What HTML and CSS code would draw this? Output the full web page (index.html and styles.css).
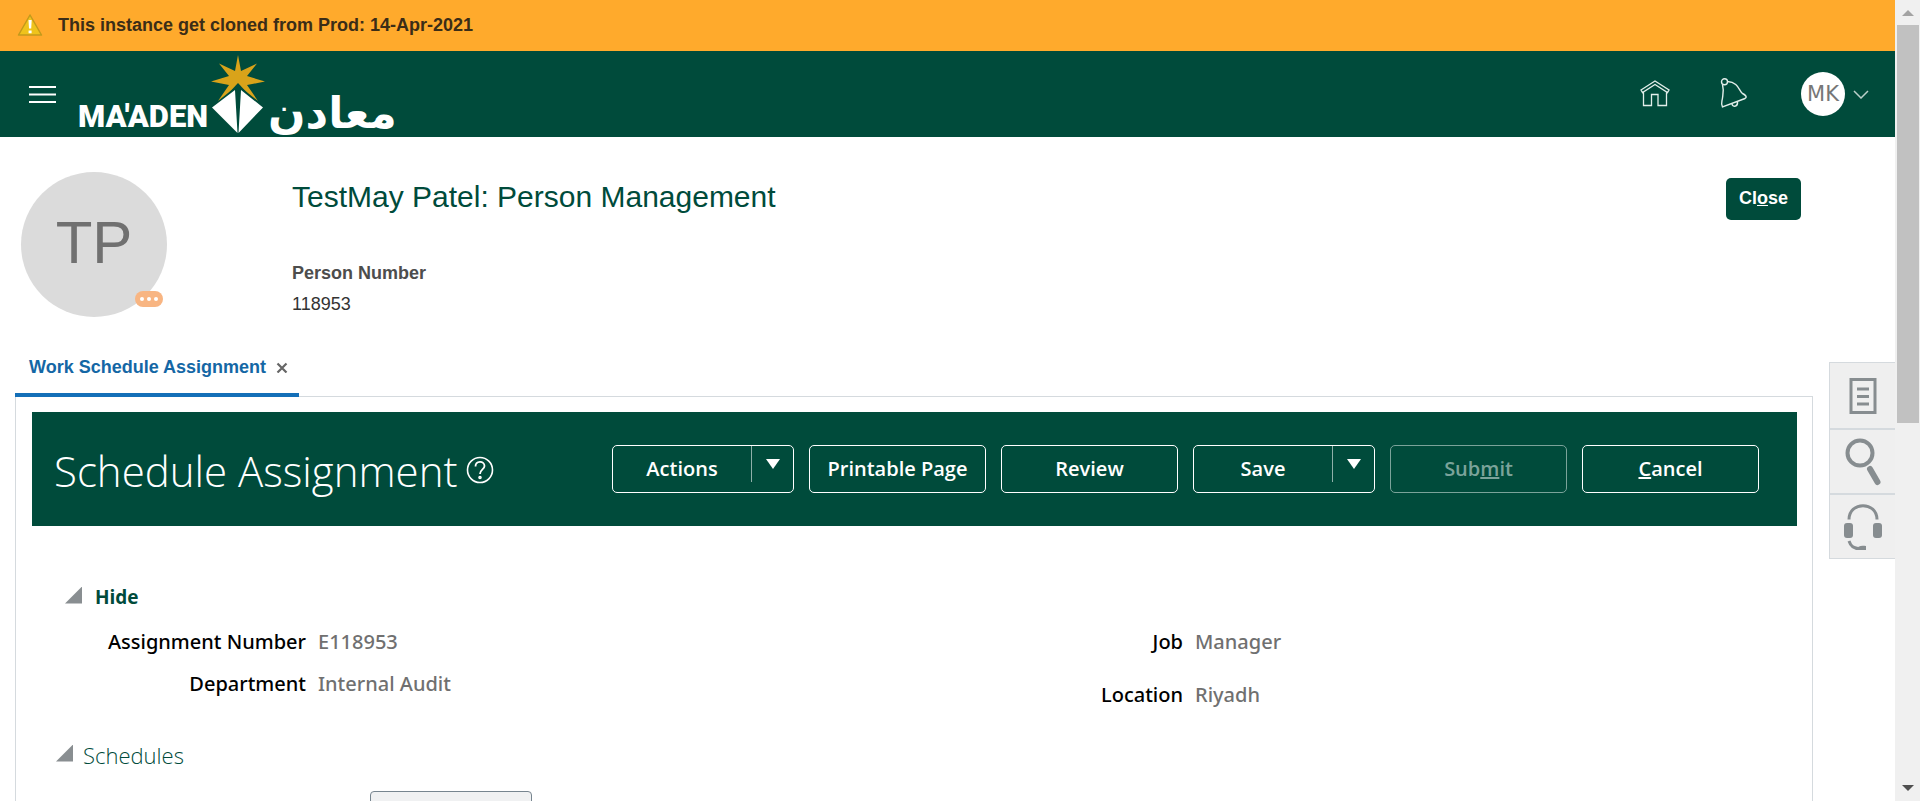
FILE: index.html
```html
<!DOCTYPE html>
<html lang="en">
<head>
<meta charset="utf-8">
<title>TestMay Patel: Person Management</title>
<link rel="stylesheet" href="styles.css">
</head>
<body>
<div class="window">
  <div class="page">
    <div class="banner" role="status">
      <svg class="banner-icon" width="26" height="24" viewBox="0 0 26 24" aria-hidden="true"><path d="M13 1 L24.500 21 H1.500 Z" fill="#efc31c" stroke="#c39a1c" stroke-width="1.500" stroke-linejoin="round"/><path d="M11.500 6 h3.200 l-.5 8.500 h-2.200z M11.600 16.400h3v2.800h-3z" fill="#fff"/></svg>
      <span>This instance get cloned from Prod: 14-Apr-2021</span>
    </div>
    <header class="header">
      <button class="icon-button" aria-label="Navigator"><svg width="28" height="20" viewBox="0 0 28 20"><path d="M0 3h27M0 10.500h27M0 18h27" stroke="#fff" stroke-width="2"/></svg></button>
      <a class="logo" href="#" aria-label="Ma'aden home">
        <span class="logo-latin">MA'ADEN</span>
        <svg width="54" height="80" viewBox="0 0 54 80" aria-hidden="true"><path d="M27 1 L30 17 L46 9.500 L36 22 L54 27.500 L36 31 L47 47 L27 31 L7 47 L18 31 L0 27.500 L18 22 L8 9.500 L24 17 Z" fill="#d9a31a"/><path d="M27 29 L40 43 H14 Z" fill="#004b3b"/><path d="M24 36 L26.500 79 L1 53.500 Z M30 36 L52 53.500 L27.500 79 Z" fill="#fff"/></svg>
        <span class="logo-arabic" lang="ar" dir="rtl">معادن</span>
      </a>
      <nav class="header-tools">
        <button class="icon-button" aria-label="Home"><svg width="30" height="28" viewBox="0 0 30 28" fill="none" stroke="#e2eeea" stroke-width="1.300"><path d="M1 10 L15 1 L29 10 L27.500 12.500 L15 4.500 L2.500 12.500 Z M3.500 12 V25.500 H11.500 V14.500 H18 V25.500 H26.500 V12"/></svg></button>
        <button class="icon-button" aria-label="Notifications"><svg width="28" height="32" viewBox="0 0 28 32" fill="none" stroke="#e2eeea" stroke-width="1.400"><circle cx="4.500" cy="3.800" r="3"/><path d="M2.500 6.500 C4 12 3 16 2.500 20 C2 24 .5 26 2.500 29 L25 20.500 C27.500 19 25.500 17 22.500 15.500 C19 13 18.500 4 7.500 3.500 M12 26 C13 30 18 28.500 17.500 24"/></svg></button>
        <button class="user-menu" aria-label="MK user menu"><span class="user-badge">MK</span><svg width="16" height="10" viewBox="0 0 16 10" fill="none" stroke="#b9cfc9" stroke-width="1.500"><path d="M1 2l7 7 7-7"/></svg></button>
      </nav>
    </header>
    <section class="person">
      <div class="avatar">TP<button class="avatar-more" aria-label="More"><i></i><i></i><i></i></button></div>
      <div class="person-info">
        <h1 class="person-title">TestMay Patel: Person Management</h1>
        <dl class="person-number"><dt>Person Number</dt><dd>118953</dd></dl>
      </div>
      <button class="close-button">Cl<u>o</u>se</button>
    </section>
    <div class="work-row">
      <main class="work">
        <div class="tabs">
          <div class="tab"><a href="#">Work Schedule Assignment</a><button class="icon-button" aria-label="Close tab"><svg width="12" height="12" viewBox="0 0 12 12"><path d="M1.500 2.500l9 9m0-9l-9 9" stroke="#666" stroke-width="2.200"/></svg></button></div>
        </div>
        <div class="panel">
          <div class="toolbar">
            <h2 class="toolbar-title">Schedule Assignment</h2>
            <button class="icon-button help" aria-label="Help"><svg width="28" height="28" viewBox="0 0 28 28" fill="none" stroke="#fff" stroke-width="1.600"><circle cx="14" cy="14" r="12.500"/><path d="M9.500 10.500 C9.500 4.500 18.500 4.500 18.500 10 C18.500 13.500 14 13.500 14 18" stroke-width="1.800"/><circle cx="14" cy="21.500" r="1"/></svg></button>
            <div class="actions">
              <div class="split"><button class="split-main">Actions</button><button class="split-arrow" aria-label="More actions"></button></div>
              <button class="action">Printable Page</button>
              <button class="action">Review</button>
              <div class="split"><button class="split-main">Save</button><button class="split-arrow" aria-label="More save options"></button></div>
              <button class="action" disabled>Sub<u>m</u>it</button>
              <button class="action"><u>C</u>ancel</button>
            </div>
          </div>
          <button class="disclosure hide-toggle" aria-expanded="true"><span class="triangle"></span>Hide</button>
          <div class="details">
            <dl class="detail-list"><dt>Assignment Number</dt><dd>E118953</dd><dt>Department</dt><dd>Internal Audit</dd></dl>
            <dl class="detail-list detail-list-right"><dt>Job</dt><dd>Manager</dd><dt>Location</dt><dd>Riyadh</dd></dl>
          </div>
          <h3 class="schedules"><button class="disclosure schedules-toggle" aria-expanded="true"><span class="triangle"></span>Schedules</button></h3>
          <button class="table-button" aria-label="Table actions"></button>
        </div>
      </main>
      <aside class="side-tools">
        <button aria-label="Worklist"><svg width="28" height="36" viewBox="0 0 28 36" fill="none" stroke="#878d90" stroke-width="3"><path d="M2 1.500h24v33H2zM8 11h12M8 18.500h12M8 26h12"/></svg></button>
        <button aria-label="Search"><svg width="36" height="48" viewBox="0 0 36 48" fill="none" stroke="#878d90"><circle cx="15" cy="15" r="12.500" stroke-width="4"/><path d="M25 31l7.500 13" stroke-width="6" stroke-linecap="round"/></svg></button>
        <button aria-label="Support"><svg width="40" height="48" viewBox="0 0 40 48" fill="none" stroke="#878d90" stroke-width="3"><path d="M6 16.500C6-2 34-2 34 16.500M6 38c2 6 5 7 9 7.500"/><rect x="1" y="20" width="9" height="15" rx="3" fill="#878d90" stroke="none"/><rect x="30" y="20" width="9" height="15" rx="3" fill="#878d90" stroke="none"/><path d="M12 47c3-4 6-5 11-4v4z" fill="#878d90" stroke="none"/></svg></button>
      </aside>
    </div>
  </div>
  <div class="scroll" aria-hidden="true"><span class="scroll-up"></span><span class="scroll-track"><span class="scroll-thumb"></span></span><span class="scroll-down"></span></div>
</div>
</body>
</html>
```

FILE: styles.css
```css
* { box-sizing: border-box; }
body { margin: 0; background: #fff; font-family: "Liberation Sans", Arial, sans-serif; font-size: 18px; color: #333; }
button { border: 0; padding: 0; margin: 0; background: none; font: inherit; color: inherit; }
a { text-decoration: none; }
svg { display: block; }
dl, dt, dd, h1, h2, h3 { margin: 0; }

.window { display: grid; grid-template-columns: minmax(0, 1fr) 25px; height: 100vh; overflow: hidden; }
.page { min-width: 0; overflow: hidden; }

.banner { display: flex; align-items: center; gap: 15px; height: 51px; padding: 0 17px; background: #ffaa2c; color: #3b2d17; font-weight: bold; }
.header { display: flex; align-items: center; height: 86px; padding: 0 26px 0 29px; background: #004b3b; }
.logo { display: flex; align-items: flex-end; gap: 3px; height: 80px; margin-left: 21px; color: #fff; }
.logo-latin { font: 900 31px/34px Roboto, sans-serif; }
.logo-arabic { font: bold 44px/42px "DejaVu Sans", sans-serif; }
.header-tools { display: flex; align-items: center; gap: 50px; margin-left: auto; }
.user-menu { display: flex; align-items: center; gap: 8px; margin-left: 3px; }
.user-badge { display: grid; place-items: center; width: 44px; height: 44px; border-radius: 50%; background: #fff; color: #777; font: 21px/24px "DejaVu Sans", sans-serif; }

.person { display: flex; align-items: flex-start; height: 210px; padding: 35px 94px 0 21px; }
.avatar { position: relative; display: grid; place-items: center; width: 146px; height: 145px; padding-bottom: 4px; border-radius: 50%; background: #dbdbdb; color: #707070; font-size: 60px; }
.avatar-more { position: absolute; right: 4px; bottom: 10px; display: flex; align-items: center; justify-content: center; gap: 3px; width: 28px; height: 16px; border-radius: 8px; background: #f8b582; }
.avatar-more i { width: 4px; height: 4px; border-radius: 50%; background: #fff; }
.person-info { flex: 1; margin-left: 125px; padding-top: 7px; }
.person-title { color: #004b3b; font-size: 30px; line-height: 36px; font-weight: normal; }
.person-number { margin-top: 43px; line-height: 31px; }
.person-number dt { color: #4d4d4d; font-weight: bold; }
.close-button { margin-top: 6px; width: 75px; height: 42px; padding-bottom: 2px; border-radius: 5px; background: #004b3b; color: #fff; font-weight: bold; }

.work-row { display: flex; align-items: flex-start; }
.work { flex: 1; min-width: 0; margin: 0 16px 0 15px; }
.tabs { display: flex; height: 50px; border-bottom: 1px solid #d5dade; }
.tab { display: flex; align-items: center; gap: 10px; height: 50px; padding: 0 11px 6px 14px; border-bottom: 4px solid #146fb8; }
.tab a { color: #1467a5; font-weight: bold; }
.panel { border: 1px solid #d5dade; border-top: 0; height: 460px; padding: 15px 15px 0 16px; }
.toolbar { display: flex; align-items: center; height: 114px; padding: 0 38px 0 22px; background: #004b3b; color: #fff; }
.toolbar-title { padding-top: 4px; font: 300 42px/56px "Open Sans", sans-serif; white-space: nowrap; }
.help { margin-left: 9px; padding-top: 2px; }
.actions { display: flex; gap: 15px; margin-left: auto; font: 600 20px/24px "Open Sans", sans-serif; }
.action { width: 177px; height: 48px; border: 1px solid #fff; border-radius: 5px; white-space: nowrap; }
.action:disabled { color: #7ba39a; border-color: #7ba39a; }
.split { display: flex; width: 182px; height: 48px; border: 1px solid #fff; border-radius: 5px; }
.split-main { flex: 1; }
.split-arrow { display: flex; justify-content: center; width: 42px; height: 36px; padding-top: 13px; border-left: 1px solid #8fb0a9; }
.split-arrow::before { content: ""; border: 7px solid transparent; border-top: 10px solid #fff; border-bottom: 0; }

.disclosure { display: flex; align-items: center; }
.triangle { width: 17px; height: 17px; margin-bottom: 4px; background: #898e91; clip-path: polygon(100% 0, 100% 100%, 0 100%); }
.hide-toggle { gap: 13px; margin: 57px 0 0 33px; color: #004b3b; font: bold 19px/28px "Open Sans", sans-serif; }
.details { display: grid; grid-template-columns: 861px 1fr; margin-top: 17px; font: 500 20px/28px "Noto Sans", sans-serif; }
.detail-list { display: grid; grid-template-columns: 274px 1fr; align-content: start; gap: 14px 12px; }
.detail-list-right { grid-template-columns: 290px 1fr; row-gap: 25px; }
.detail-list dt { color: #000; text-align: right; }
.detail-list dd { color: #707070; }
.schedules { margin: 30px 0 0 24px; }
.schedules-toggle { gap: 10px; color: #004b3b; font: 300 22px/32px "Open Sans", sans-serif; }
.table-button { display: block; width: 162px; height: 38px; margin: 20px 0 0 338px; border: 1px solid #77858f; border-radius: 4px; background: #f0f1f2; }

.side-tools { width: 66px; margin-top: 15px; border: 1px solid #d5dade; border-right: 0; background: #efefef; }
.side-tools button { display: grid; place-items: center; width: 100%; height: 65px; }
.side-tools button + button { border-top: 2px solid #d5dade; }

.scroll { display: flex; flex-direction: column; align-items: center; padding: 10px 1px 10px 2px; background: #f0f0f0; }
.scroll-up { border: 6px solid transparent; border-top: 0; border-bottom: 6px solid #a3a3a3; }
.scroll-down { border: 6px solid transparent; border-bottom: 0; border-top: 6px solid #505050; }
.scroll-track { flex: 1; align-self: stretch; padding: 9px 0; }
.scroll-thumb { display: block; height: 53%; background: #c1c1c1; }
```
